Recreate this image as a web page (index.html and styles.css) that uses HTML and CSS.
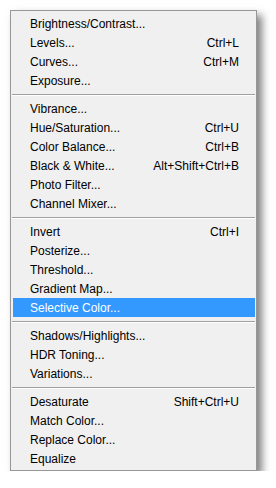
FILE: index.html
```html
<!DOCTYPE html>
<html lang="en">
<head>
    <meta charset="UTF-8">
    <title>Adjustments</title>
    <link rel="stylesheet" href="styles.css">
</head>
<body>
    <div class="menu">
        <div class="menu-item"><span>Brightness/Contrast...</span></div>
        <div class="menu-item"><span>Levels...</span><span class="key">Ctrl+L</span></div>
        <div class="menu-item"><span>Curves...</span><span class="key">Ctrl+M</span></div>
        <div class="menu-item"><span>Exposure...</span></div>
        <div class="separator"></div>
        <div class="menu-item"><span>Vibrance...</span></div>
        <div class="menu-item"><span>Hue/Saturation...</span><span class="key">Ctrl+U</span></div>
        <div class="menu-item"><span>Color Balance...</span><span class="key">Ctrl+B</span></div>
        <div class="menu-item"><span>Black &amp; White...</span><span class="key">Alt+Shift+Ctrl+B</span></div>
        <div class="menu-item"><span>Photo Filter...</span></div>
        <div class="menu-item"><span>Channel Mixer...</span></div>
        <div class="separator"></div>
        <div class="menu-item"><span>Invert</span><span class="key">Ctrl+I</span></div>
        <div class="menu-item"><span>Posterize...</span></div>
        <div class="menu-item"><span>Threshold...</span></div>
        <div class="menu-item"><span>Gradient Map...</span></div>
        <div class="menu-item active"><span>Selective Color...</span></div>
        <div class="separator"></div>
        <div class="menu-item"><span>Shadows/Highlights...</span></div>
        <div class="menu-item"><span>HDR Toning...</span></div>
        <div class="menu-item"><span>Variations...</span></div>
        <div class="separator"></div>
        <div class="menu-item"><span>Desaturate</span><span class="key">Shift+Ctrl+U</span></div>
        <div class="menu-item"><span>Match Color...</span></div>
        <div class="menu-item"><span>Replace Color...</span></div>
        <div class="menu-item"><span>Equalize</span></div>
    </div>
</body>
</html>
```

FILE: styles.css
```css
* {
    margin: 0;
    padding: 0;
    box-sizing: border-box;
}

body {
    background-color: #fff;
    padding: 10px 0 0 10px;
    font-family: 'Liberation Sans', Arial, sans-serif;
    font-size: 12px;
    color: #000;
}

.menu {
    width: 247px;
    background-color: #f0f0f0;
    border: 1px solid #979797;
    padding: 3px 0 2px;
    box-shadow: 5px 5px 8px rgba(0, 0, 0, 0.5);
}

.menu-item {
    display: flex;
    justify-content: space-between;
    align-items: center;
    height: 19px;
    margin: 0 1px 0 2px;
    padding: 0 16px 0 17px;
}

.menu-item.active {
    background-color: #3399ff;
    color: #fff;
}

.separator {
    height: 9px;
    margin: 0 1px;
    display: flex;
    align-items: center;
}

.separator::before {
    content: '';
    flex: 1;
    height: 1px;
    background-color: #a0a0a0;
    border-bottom: 1px solid #fff;
    box-sizing: content-box;
}
```
